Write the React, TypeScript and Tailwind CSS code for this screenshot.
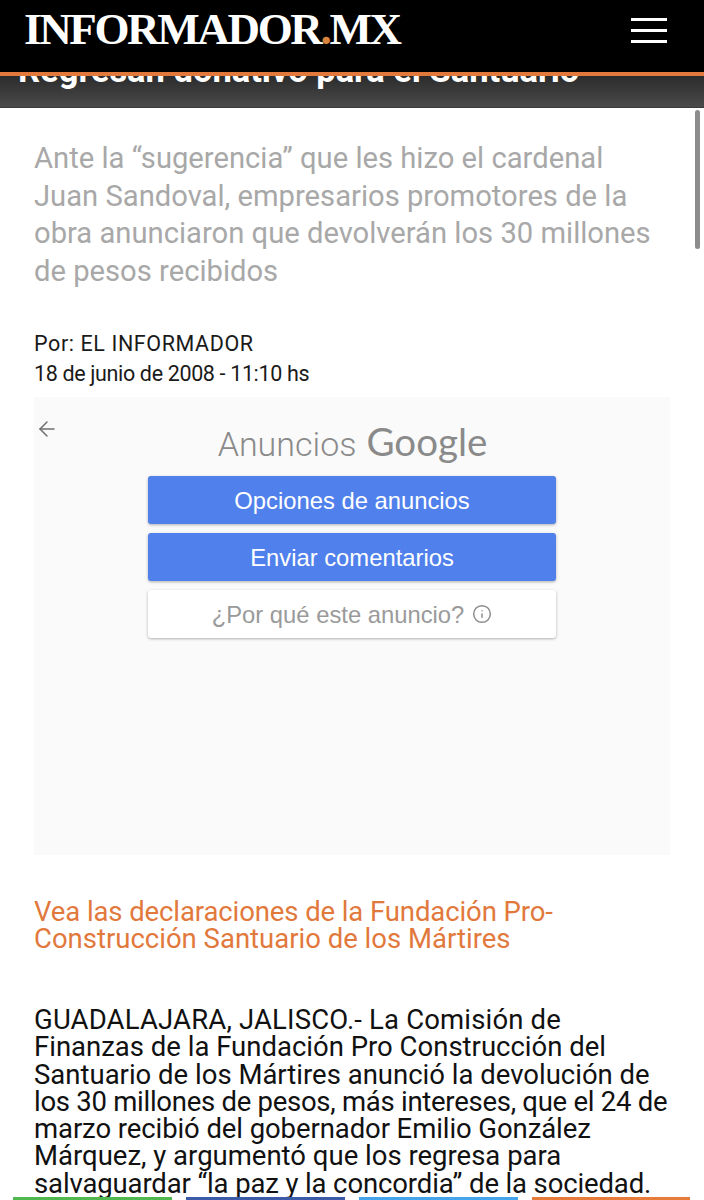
import React from 'react';
import { ArrowLeft, Info } from 'lucide-react';

const Header: React.FC = () => {
  return (
    <header className="bg-black h-[76px] border-b-4 border-[#e2793c] flex items-start justify-between pl-6 pr-[37px] relative z-10 shrink-0">
      <div className="font-['Liberation_Serif',serif] font-bold text-white text-[45px] tracking-[-2.35px] leading-[58px] whitespace-nowrap">
        INFORMADOR<span className="text-[#d9843f]">.</span>MX
      </div>
      <div className="flex flex-col gap-[8px] mt-[18px]">
        <span className="block w-9 h-[3px] bg-white" />
        <span className="block w-9 h-[3px] bg-white" />
        <span className="block w-9 h-[3px] bg-white" />
      </div>
    </header>
  );
};

const App: React.FC = () => {
  return (
    <div className="relative h-[1200px] w-[704px] overflow-hidden bg-white font-['Roboto',sans-serif] flex flex-col">
      <Header />

      <div className="h-[32px] shrink-0 overflow-hidden bg-gradient-to-b from-[#2c2c2c] to-[#4a4a4a] border-b border-[#3a3a3a] pl-[18px]">
        <h1 className="-mt-[24px] text-white text-[34.5px] leading-[36px] font-bold whitespace-nowrap">
          Regresan donativo para el Santuario
        </h1>
      </div>

      <main className="px-[34px] pt-[32px]">
        <p className="text-[#a8a8a8] text-[29.2px] leading-[37.5px] whitespace-nowrap">
          Ante la “sugerencia” que les hizo el cardenal<br />
          Juan Sandoval, empresarios promotores de la<br />
          obra anunciaron que devolverán los 30 millones<br />
          de pesos recibidos
        </p>

        <div className="mt-[39px] text-[#1a1a1a] text-[21.5px] leading-[30px] whitespace-nowrap">
          <div className="tracking-[0.6px]">Por: EL INFORMADOR</div>
          <div className="tracking-[-0.35px]">18 de junio de 2008 - 11:10 hs</div>
        </div>

        <section className="relative mt-[8px] h-[458px] w-[636px] bg-[#fafafa] flex flex-col items-center pt-[22px]">
          <ArrowLeft className="absolute left-[1px] top-[20px] text-[#6f6f6f]" size={24} strokeWidth={1.5} />
          <div className="h-[44px] flex items-baseline gap-[10px] text-[#8a8a8a] ml-[1px]">
            <span className="text-[34px] leading-[44px] font-light">Anuncios</span>
            <span className="text-[38.5px] leading-[44px] font-['Lato',sans-serif] font-normal">Google</span>
          </div>
          <div className="mt-[13px] flex w-[408px] flex-col gap-[9px] font-['Liberation_Sans',sans-serif] text-[23.8px]">
            <button className="h-12 pt-[1px] rounded-[3px] bg-[#5080ec] text-white shadow-[0_1px_3px_rgba(0,0,0,0.3)]">
              Opciones de anuncios
            </button>
            <button className="h-12 pt-[1px] rounded-[3px] bg-[#5080ec] text-white shadow-[0_1px_3px_rgba(0,0,0,0.3)]">
              Enviar comentarios
            </button>
            <button className="h-12 pt-[1px] rounded-[3px] bg-white text-[#9a9a9a] shadow-[0_1px_3px_rgba(0,0,0,0.3)] flex items-center justify-center gap-2">
              ¿Por qué este anuncio?
              <Info size={20} strokeWidth={1.75} className="text-[#8a8a8a] -mt-[1px]" />
            </button>
          </div>
        </section>

        <p className="mt-[43px] text-[#e2793c] text-[27.5px] leading-[27px] whitespace-nowrap">
          <span className="tracking-[-0.1px]">Vea las declaraciones de la Fundación Pro-</span><br />
          Construcción Santuario de los Mártires
        </p>

        <p className="mt-[54px] text-[#111] text-[27.5px] leading-[27.25px] whitespace-nowrap">
          <span className="tracking-[0.16px]">GUADALAJARA, JALISCO.- La Comisión de</span><br />
          Finanzas de la Fundación Pro Construcción del<br />
          Santuario de los Mártires anunció la devolución de<br />
          <span className="tracking-[-0.27px]">los 30 millones de pesos, más intereses, que el 24 de</span><br />
          <span className="tracking-[-0.09px]">marzo recibió del gobernador Emilio González</span><br />
          Márquez, y argumentó que los regresa para<br />
          <span className="tracking-[-0.13px]">salvaguardar “la paz y la concordia” de la sociedad.</span>
        </p>
      </main>

      {/* scrollbar */}
      <div className="absolute right-[4px] top-[110px] h-[139px] w-[5px] rounded-full bg-[#8c8c8c]" />

      {/* share bars pinned to the bottom */}
      <div className="absolute bottom-0 left-[13px] flex gap-[14px]">
        <span className="block h-[3px] w-[159px] bg-[#4fb84f]" />
        <span className="block h-[3px] w-[159px] bg-[#3b5aa8]" />
        <span className="block h-[3px] w-[159px] bg-[#45a5ec]" />
        <span className="block h-[3px] w-[158px] bg-[#e67b3a]" />
      </div>
    </div>
  );
};

export default App;
